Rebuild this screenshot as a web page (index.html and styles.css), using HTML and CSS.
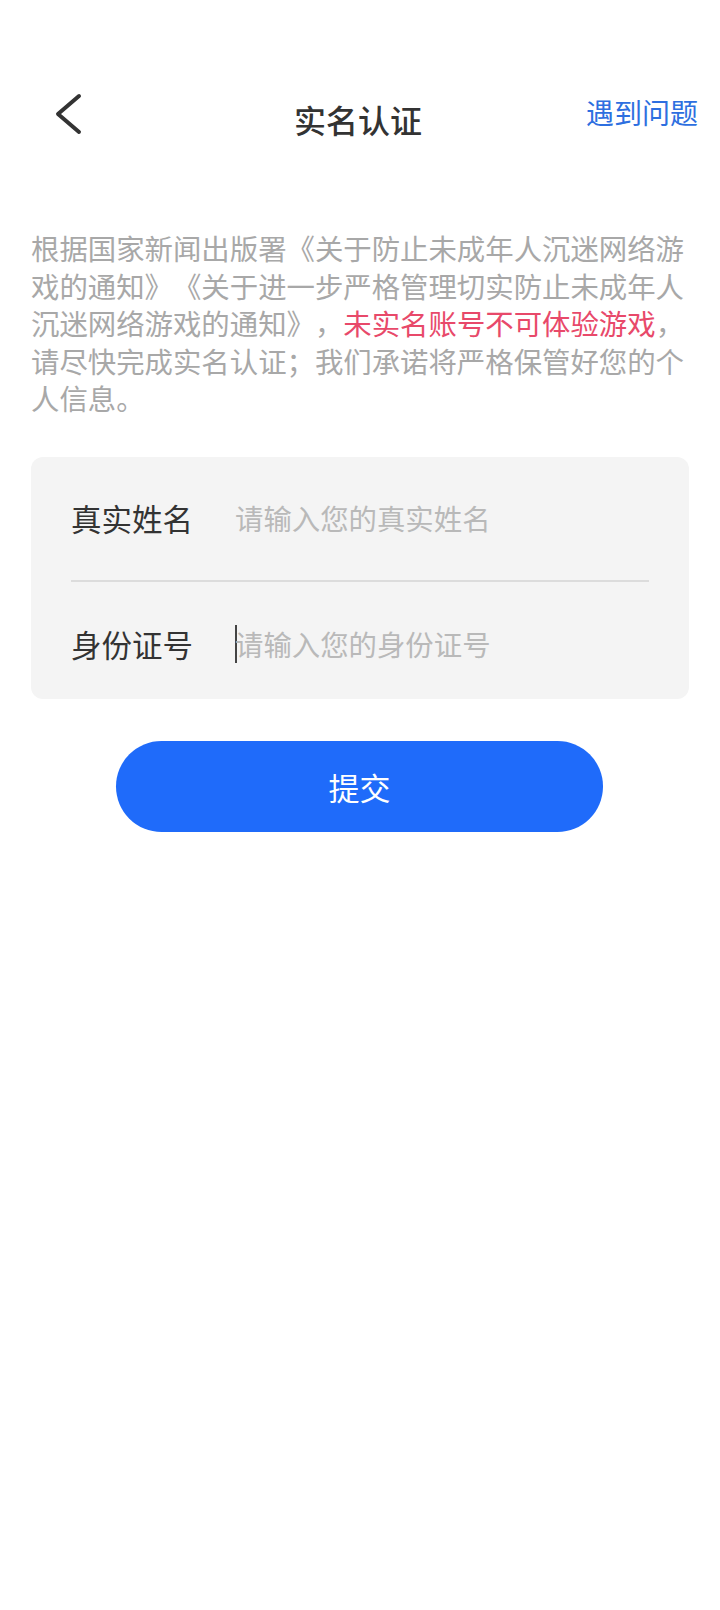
FILE: index.html
```html
<!DOCTYPE html>
<html lang="zh-CN">
<head>
<meta charset="utf-8">
<title>实名认证</title>
<link rel="stylesheet" href="styles.css">
</head>
<body>
<div class="topBar">
  <a class="backBtn">
    <svg width="28" height="42" viewBox="0 0 28 42"><polyline points="25,3 4,21 25,39" fill="none" stroke="#333" stroke-width="4" stroke-linecap="round" stroke-linejoin="round"/></svg>
  </a>
  <div class="pageTitle">实名认证</div>
  <a class="helpLink">遇到问题</a>
</div>
<p class="notice">根据国家新闻出版署《关于防止未成年人沉迷网络游戏的通知》《关于进一步严格管理切实防止未成年人沉迷网络游戏的通知》，<span class="warn">未实名账号不可体验游戏</span>，请尽快完成实名认证；我们承诺将严格保管好您的个人信息。</p>
<form class="idForm">
  <div class="formRow firstRow">
    <label for="realName">真实姓名</label>
    <input id="realName" type="text" placeholder="请输入您的真实姓名">
  </div>
  <div class="formRow secondRow">
    <label for="idNum">身份证号</label>
    <span class="caret"></span>
    <input id="idNum" type="text" placeholder="请输入您的身份证号">
  </div>
</form>
<button class="submitBtn" type="button">提交</button>
</body>
</html>
```

FILE: styles.css
```css
body {
  margin: 0;
  font-family: "Noto Sans CJK SC", "Noto Sans", sans-serif;
  background-color: white;
  color: #333;
  text-spacing-trim: space-all;
}
.topBar {
  display: grid;
  grid-template-columns: 1fr auto 1fr;
  align-items: start;
  height: 135px;
  padding: 94px 22px 0 20px;
  box-sizing: border-box;
}
.backBtn {
  display: block;
  width: 28px;
  height: 42px;
  margin-left: 34px;
  margin-top: -1px;
}
.backBtn svg {
  display: block;
}
.pageTitle {
  margin-top: 9px;
  margin-left: -2px;
  font-size: 32px;
  line-height: 32px;
  font-weight: 500;
  color: #333;
}
.helpLink {
  justify-self: end;
  margin-top: 4px;
  font-size: 28px;
  line-height: 28px;
  color: #2d6fe0;
}
.notice {
  margin: 94px 31px 0 31px;
  font-size: 28.4px;
  line-height: 37.5px;
  color: #a8a8a8;
}
.warn {
  color: #e8496a;
}
.idForm {
  margin: 40px 31px 0 31px;
  padding: 0 40px;
  height: 242px;
  box-sizing: border-box;
  background-color: #f4f4f4;
  border-radius: 12px;
}
.formRow {
  display: flex;
  align-items: center;
}
.firstRow {
  height: 123px;
  border-bottom: 2px solid #dcdcdc;
}
.secondRow {
  height: 117px;
  padding-top: 7px;
  box-sizing: border-box;
}
.formRow label {
  width: 122px;
  margin-right: 42px;
  font-size: 30.5px;
  line-height: 30px;
  color: #333;
}
.formRow input {
  flex: 1;
  min-width: 0;
  padding: 0;
  border: none;
  outline: none;
  background: transparent;
  font-family: inherit;
  font-size: 28.4px;
  line-height: 38px;
  color: #333;
}
.formRow input::placeholder {
  color: #b9b9b9;
}
.caret {
  width: 1.5px;
  height: 38px;
  margin-right: -1.5px;
  background-color: #444;
}
.submitBtn {
  display: block;
  width: 487px;
  height: 91px;
  margin: 42px 0 0 116px;
  padding: 0;
  border: none;
  border-radius: 46px;
  background-color: #1f6bfa;
  color: white;
  font-family: inherit;
  font-size: 31px;
  line-height: 31px;
}
```
